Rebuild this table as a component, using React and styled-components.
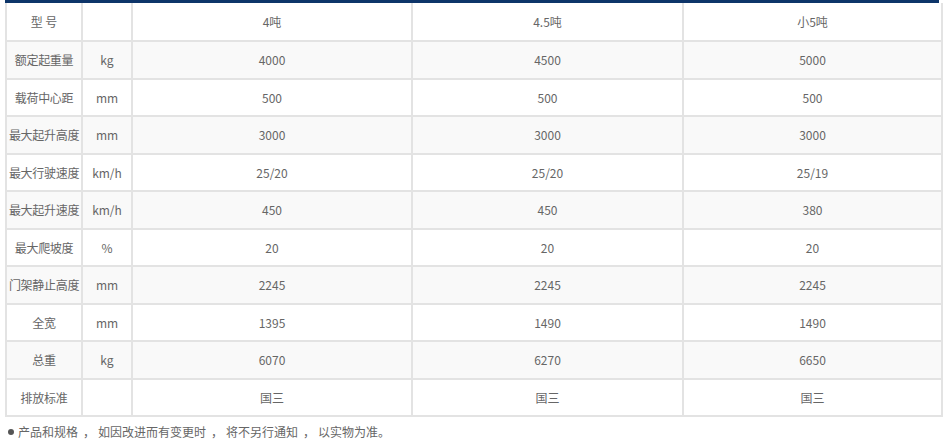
import React from "react";
import styled, { createGlobalStyle } from "styled-components";

const Global = createGlobalStyle`
  html, body { margin: 0; padding: 0; background: #fff; }
  body { font-family: "Microsoft YaHei", "Noto Sans CJK SC", "Noto Sans", sans-serif; }
`;

const Wrap = styled.div`
  padding-left: 5px;
  width: 936px;
`;

const TopBar = styled.div`
  height: 3px;
  background: #0d3569;
  width: 934px;
`;

const Table = styled.table`
  width: 936px;
  border-collapse: collapse;
  table-layout: fixed;
  font-size: 12px;
  color: #666;
`;

const Row = styled.tr`
  background: ${(p) => (p.$alt ? "#f9f9f9" : "#fff")};
`;

const Cell = styled.td`
  border: 2px solid #e3e3e3;
  border-top: ${(p) => (p.$first ? "none" : "2px solid #e3e3e3")};
  height: ${(p) => (p.$first ? "37px" : "35.5px")};
  padding: 0;
  text-align: center;
  vertical-align: middle;
  white-space: nowrap;
  letter-spacing: ${(p) => (p.$label ? "-0.3px" : "0")};
  overflow: visible;
`;

const Note = styled.div`
  margin: 7px 0 0 3px;
  font-size: 12px;
  color: #666;
  line-height: 16px;
  display: flex;
  align-items: center;
  white-space: pre;
`;

const Bullet = styled.span`
  display: inline-block;
  width: 6px;
  height: 6px;
  border-radius: 50%;
  background: #555;
  margin-right: 4px;
`;

const Comma = styled.span`
  display: inline-block;
  margin: 0 0 0 5px;
  width: 15px;
`;

const rows = [
  ["额定起重量", "kg", "4000", "4500", "5000"],
  ["载荷中心距", "mm", "500", "500", "500"],
  ["最大起升高度", "mm", "3000", "3000", "3000"],
  ["最大行驶速度", "km/h", "25/20", "25/20", "25/19"],
  ["最大起升速度", "km/h", "450", "450", "380"],
  ["最大爬坡度", "%", "20", "20", "20"],
  ["门架静止高度", "mm", "2245", "2245", "2245"],
  ["全宽", "mm", "1395", "1490", "1490"],
  ["总重", "kg", "6070", "6270", "6650"],
  ["排放标准", "", "国三", "国三", "国三"],
];

const noteParts = ["产品和规格", "如因改进而有变更时", "将不另行通知", "以实物为准。"];

export default function App() {
  return (
    <>
      <Global />
      <Wrap>
        <TopBar />
        <Table>
          <colgroup>
            <col style={{ width: 76 }} />
            <col style={{ width: 50 }} />
            <col style={{ width: 280 }} />
            <col style={{ width: 271 }} />
            <col style={{ width: 259 }} />
          </colgroup>
          <tbody>
            <Row>
              <Cell $first>型 号</Cell>
              <Cell $first></Cell>
              <Cell $first>4吨</Cell>
              <Cell $first>4.5吨</Cell>
              <Cell $first>小5吨</Cell>
            </Row>
            {rows.map((r, i) => (
              <Row key={i} $alt={i % 2 === 0}>
                {r.map((c, j) => (
                  <Cell key={j} $label={j === 0}>
                    {c}
                  </Cell>
                ))}
              </Row>
            ))}
          </tbody>
        </Table>
        <Note>
          <Bullet />
          {noteParts.map((p, i) => (
            <React.Fragment key={i}>
              {p}
              {i < noteParts.length - 1 && <Comma>，</Comma>}
            </React.Fragment>
          ))}
        </Note>
      </Wrap>
    </>
  );
}
